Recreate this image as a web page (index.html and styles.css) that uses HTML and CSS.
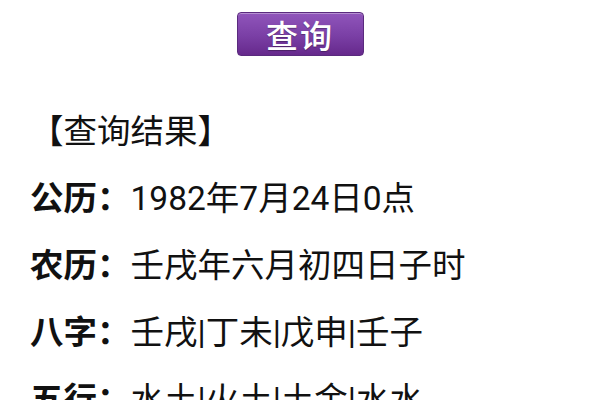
FILE: index.html
```html
<!DOCTYPE html>
<html lang="zh-CN">
<head>
<meta charset="utf-8">
<link rel="stylesheet" href="styles.css">
</head>
<body>
<div class="top">
  <button class="query">查询</button>
</div>
<div class="result">
  <div class="row">【查询结果】</div>
  <div class="row"><span class="label">公历：</span>1982年7月24日0点</div>
  <div class="row"><span class="label">农历：</span>壬戌年六月初四日子时</div>
  <div class="row"><span class="label">八字：</span>壬戌|丁未|戊申|壬子</div>
  <div class="row"><span class="label">五行：</span>水土|火土|土金|水水</div>
</div>
</body>
</html>
```
FILE: styles.css
```css
html, body {
  margin: 0;
  padding: 0;
  background: #ffffff;
}
body {
  font-family: Roboto, "Noto Sans CJK SC", sans-serif;
  color: #111111;
  overflow: hidden;
  height: 400px;
}
.top {
  display: flex;
  justify-content: center;
  padding-top: 12px;
}
.query {
  width: 127px;
  height: 44px;
  box-sizing: border-box;
  border: 1px solid #5a2a7e;
  border-radius: 4px;
  background: linear-gradient(#9055bb, #7a3fa5 55%, #66298c);
  box-shadow: inset 0 1px 0 rgba(255,255,255,0.35);
  color: #ffffff;
  font-family: "Noto Sans CJK SC", sans-serif;
  font-size: 32px;
  font-weight: 500;
  line-height: 40px;
  padding: 0;
  letter-spacing: 2px;
  text-shadow: 0 1px 1px rgba(0,0,0,0.3);
}
.result {
  padding-left: 30px;
  margin-top: 42px;
}
.row {
  font-size: 33.5px;
  line-height: 67px;
  height: 67px;
  white-space: nowrap;
}
.label {
  font-weight: bold;
}
```
